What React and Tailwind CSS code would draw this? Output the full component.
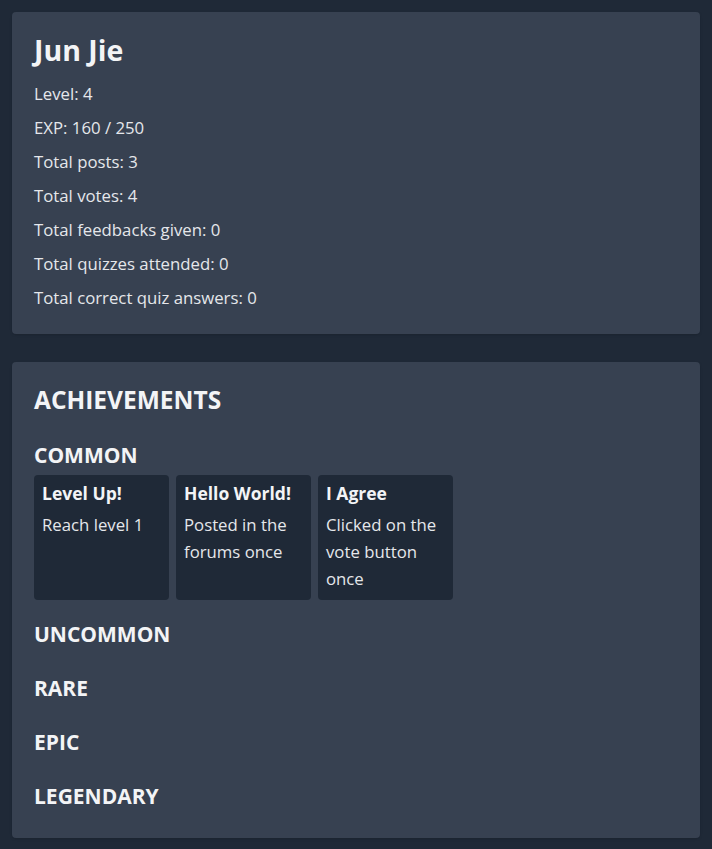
const stats = [
  "Level: 4",
  "EXP: 160 / 250",
  "Total posts: 3",
  "Total votes: 4",
  "Total feedbacks given: 0",
  "Total quizzes attended: 0",
  "Total correct quiz answers: 0",
];

const rarities = [
  {
    name: "COMMON",
    items: [
      { title: "Level Up!", desc: "Reach level 1" },
      { title: "Hello World!", desc: "Posted in the forums once" },
      { title: "I Agree", desc: "Clicked on the vote button once" },
    ],
  },
  { name: "UNCOMMON", items: [] },
  { name: "RARE", items: [] },
  { name: "EPIC", items: [] },
  { name: "LEGENDARY", items: [] },
];

export default function App() {
  return (
    <div className="min-h-screen w-full bg-[#1f2937] p-3 flex flex-col gap-7 text-[#e5e7eb] font-['Open_Sans',sans-serif]">
      {/* Profile */}
      <div className="bg-[#374151] rounded-sm shadow px-[22px] pt-[22px] pb-6">
        <h2 className="text-[28.5px] leading-8 font-bold text-[#f3f4f6] mb-4">Jun Jie</h2>
        <div className="flex flex-col gap-[10px]">
          {stats.map((s) => (
            <p key={s} className="text-[16.75px] leading-6">{s}</p>
          ))}
        </div>
      </div>

      {/* Achievements */}
      <div className="bg-[#374151] rounded-sm shadow px-[22px] pt-[22px] pb-[2px]">
        <h2 className="text-[24.5px] leading-8 font-bold text-[#f3f4f6] mb-[25px]">ACHIEVEMENTS</h2>
        {rarities.map((r) => (
          <div key={r.name}>
            <h3 className="text-[21px] leading-7 font-bold text-[#f3f4f6]">{r.name}</h3>
            <div className="flex gap-[7px] mt-1.5 mb-5">
              {r.items.map((a) => (
                <div key={a.title} className="w-[135px] bg-[#1f2937] rounded p-2">
                  <p className="font-bold text-[17.5px] leading-5 text-[#f3f4f6]">{a.title}</p>
                  <p className="mt-2 text-[16.75px] leading-[27px]">{a.desc}</p>
                </div>
              ))}
            </div>
          </div>
        ))}
      </div>
    </div>
  );
}
